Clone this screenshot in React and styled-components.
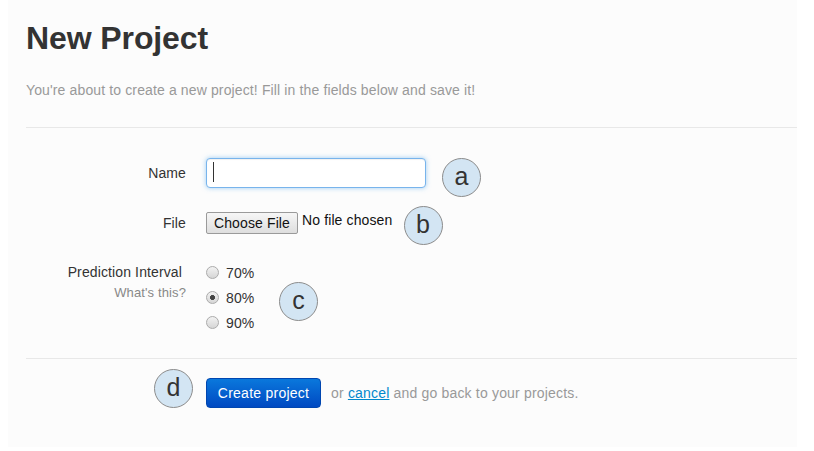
import React from "react";
import styled, { createGlobalStyle } from "styled-components";

const Global = createGlobalStyle`
  html, body { margin: 0; padding: 0; background: #ffffff; }
  body { font-family: "Liberation Sans", Arial, Helvetica, sans-serif; color: #333; letter-spacing: 0.12px; }
`;

const Page = styled.div`
  position: relative;
  width: 814px;
  height: 451px;
  overflow: hidden;
`;

const Panel = styled.div`
  margin-left: 8px;
  width: 771px;
  height: 429px;
  padding: 18px 0 0 18px;
  box-sizing: content-box;
  background: #fcfcfc;
`;

const Title = styled.h1`
  margin: 0;
  font-size: 32px;
  line-height: 40px;
  font-weight: bold;
  color: #333;
  letter-spacing: -0.1px;
`;

const Lead = styled.p`
  margin: 22px 0 0;
  font-size: 14px;
  line-height: 20px;
  color: #999;
  letter-spacing: 0.13px;
`;

const Rule = styled.hr`
  margin: ${(p) => p.$top}px 0 0;
  border: 0;
  border-top: 1px solid #e8e8e8;
  height: 0;
`;

const Form = styled.form`
  display: flex;
  flex-direction: column;
  padding-top: 30px;
`;

const Row = styled.div`
  display: grid;
  grid-template-columns: 160px 1fr;
  column-gap: 20px;
  align-items: ${(p) => p.$align || "center"};
  margin-top: ${(p) => p.$gap || 0}px;
`;

const LabelCol = styled.div`
  display: flex;
  flex-direction: column;
  align-items: flex-end;
  padding-top: ${(p) => p.$pt || 0}px;
`;

const Label = styled.label`
  font-size: 14px;
  line-height: 22px;
  color: #333;
  padding-right: ${(p) => p.$pr || 0}px;
`;

const Help = styled.span`
  font-size: 13px;
  line-height: 20px;
  color: #888;
`;

const InputWrap = styled.div`
  position: relative;
  width: 220px;
  height: 30px;
`;

const TextInput = styled.input`
  box-sizing: border-box;
  width: 220px;
  height: 30px;
  padding: 4px 8px;
  border: 1px solid #78b4ec;
  border-radius: 4px;
  background: #fff;
  outline: none;
  box-shadow: inset 0 1px 1px rgba(0, 0, 0, 0.06), 0 0 5px rgba(82, 168, 236, 0.55);
  font: 14px "Liberation Sans", Arial, sans-serif;
`;

const Caret = styled.span`
  position: absolute;
  left: 7px;
  top: 4px;
  width: 1px;
  height: 20px;
  background: #333;
`;

const FileControl = styled.div`
  display: flex;
  align-items: flex-start;
  gap: 4px;
`;

const FileButton = styled.button`
  box-sizing: border-box;
  height: 22px;
  width: 92px;
  padding: 0;
  border: 1px solid #9a9a9a;
  border-radius: 2px;
  background: linear-gradient(#f6f6f6, #dedede);
  font: 14px "Liberation Sans", Arial, sans-serif;
  letter-spacing: 0.12px;
  color: #111;
  line-height: 20px;
`;

const FileNote = styled.span`
  font-size: 14px;
  line-height: 16px;
  color: #111;
`;

const RadioList = styled.div`
  display: flex;
  flex-direction: column;
`;

const RadioItem = styled.label`
  display: flex;
  align-items: center;
  height: 25px;
  font-size: 14px;
  color: #333;
  gap: 7px;
`;

const Radio = styled.input`
  appearance: none;
  -webkit-appearance: none;
  margin: 0;
  width: 13px;
  height: 13px;
  border-radius: 50%;
  border: 1px solid #ababab;
  box-sizing: border-box;
  background: linear-gradient(#f2f2f2, #d6d6d6);
  &:checked {
    background: radial-gradient(circle, #444 0 2.2px, transparent 2.8px),
      linear-gradient(#f2f2f2, #d6d6d6);
  }
`;

const Actions = styled.div`
  display: flex;
  align-items: center;
  gap: 10px;
  padding: 19px 0 0 180px;
`;

const Primary = styled.button`
  box-sizing: border-box;
  width: 115px;
  height: 30px;
  border: 1px solid #0046b0;
  border-radius: 4px;
  background: linear-gradient(#0a78dc, #0049c2);
  color: #fff;
  font: 14px "Liberation Sans", Arial, sans-serif;
  letter-spacing: 0.25px;
  padding: 0;
`;

const Aside = styled.span`
  font-size: 14px;
  color: #999;
  letter-spacing: 0.18px;
  a {
    color: #0088cc;
    text-decoration: underline;
  }
`;

const Bubble = styled.div`
  position: absolute;
  left: ${(p) => p.$x - 19.5}px;
  top: ${(p) => p.$y - 19.5}px;
  width: 39px;
  height: 39px;
  box-sizing: border-box;
  border-radius: 50%;
  border: 1px solid #8c8c8c;
  background: #d3e5f3;
  color: #333;
  font-size: 25px;
  line-height: 35px;
  text-align: center;
  letter-spacing: 0;
`;

export default function App() {
  return (
    <Page>
      <Global />
      <Panel>
        <Title>New Project</Title>
        <Lead>You're about to create a new project! Fill in the fields below and save it!</Lead>
        <Rule $top={27} />
        <Form onSubmit={(e) => e.preventDefault()}>
          <Row>
            <LabelCol>
              <Label>Name</Label>
            </LabelCol>
            <InputWrap>
              <TextInput type="text" />
              <Caret />
            </InputWrap>
          </Row>
          <Row $gap={24}>
            <LabelCol>
              <Label>File</Label>
            </LabelCol>
            <FileControl>
              <FileButton type="button">Choose File</FileButton>
              <FileNote>No file chosen</FileNote>
            </FileControl>
          </Row>
          <Row $gap={26} $align="start">
            <LabelCol $pt={1}>
              <Label $pr={4}>Prediction Interval</Label>
              <Help>What's this?</Help>
            </LabelCol>
            <RadioList>
              <RadioItem><Radio type="radio" name="pi" />70%</RadioItem>
              <RadioItem><Radio type="radio" name="pi" defaultChecked />80%</RadioItem>
              <RadioItem><Radio type="radio" name="pi" />90%</RadioItem>
            </RadioList>
          </Row>
        </Form>
        <Rule $top={23} />
        <Actions>
          <Primary type="button">Create project</Primary>
          <Aside>or <a href="#">cancel</a> and go back to your projects.</Aside>
        </Actions>
      </Panel>
      <Bubble $x={461.5} $y={177}>a</Bubble>
      <Bubble $x={423} $y={225}>b</Bubble>
      <Bubble $x={298.5} $y={301.5}>c</Bubble>
      <Bubble $x={173.5} $y={388}>d</Bubble>
    </Page>
  );
}
